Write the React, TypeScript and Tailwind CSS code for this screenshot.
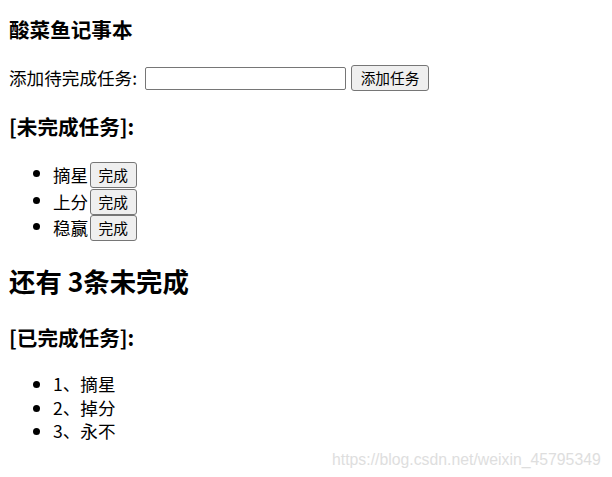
import React from "react";

const todo = ["摘星", "上分", "稳赢"];
const done = ["1、摘星", "2、掉分", "3、永不"];

function NativeButton({ children, className = "" }: { children: React.ReactNode; className?: string }) {
  return (
    <button
      type="button"
      className={`rounded-[3px] border border-[#767676] bg-[#efefef] px-[6.5px] text-[14.7px] leading-[18px] text-black ${className}`}
    >
      {children}
    </button>
  );
}

export default function App() {
  return (
    <div
      className="relative h-[477px] w-[612px] overflow-hidden bg-white pl-[9px] text-black"
      style={{ fontFamily: '"Noto Sans CJK SC", "Noto Sans", sans-serif' }}
    >
      {/* title */}
      <h3 className="pt-[16px] text-[20.6px] font-bold leading-[27px]">酸菜鱼记事本</h3>

      {/* add row */}
      <div className="mt-[22px] flex h-[26px] items-center text-[17.6px]">
        <span className="leading-[22px]">添加待完成任务:</span>
        <input
          type="text"
          className="ml-[8px] h-[23px] w-[201px] rounded-[2px] border border-[#767676] bg-white px-1 outline-none"
        />
        <NativeButton className="ml-[5px] h-[26px] w-[78px]">添加任务</NativeButton>
      </div>

      <h3 className="mt-[22px] text-[20.6px] font-bold leading-[27px]">[未完成任务]:</h3>

      <ul className="mt-[20px] list-disc pl-[44px] text-[17.6px]">
        {todo.map((t) => (
          <li key={t} className="h-[26.5px] leading-[26.5px]">
            <span className="relative top-[2px]">{t}</span>
            <NativeButton className="ml-[1.5px] inline-block h-[26px] w-[47px] align-middle">完成</NativeButton>
          </li>
        ))}
      </ul>

      <h2 className="mt-[23px] text-[26.4px] font-bold leading-[35px]">还有 3条未完成</h2>

      <h3 className="mt-[26.5px] text-[20.6px] font-bold leading-[27px]">[已完成任务]:</h3>

      <ul className="mt-[21px] list-disc pl-[44px] text-[17.6px]">
        {done.map((t) => (
          <li key={t} className="h-[23.5px] leading-[23.5px]">
            {t}
          </li>
        ))}
      </ul>

      {/* csdn watermark laid over the screenshot */}
      <div
        className="absolute left-[332px] top-[450px] text-[15.8px] leading-[20px] text-[#dedede]"
        style={{ fontFamily: '"Liberation Sans", Arial, sans-serif' }}
      >
        https://blog.csdn.net/weixin_45795349
      </div>
    </div>
  );
}
